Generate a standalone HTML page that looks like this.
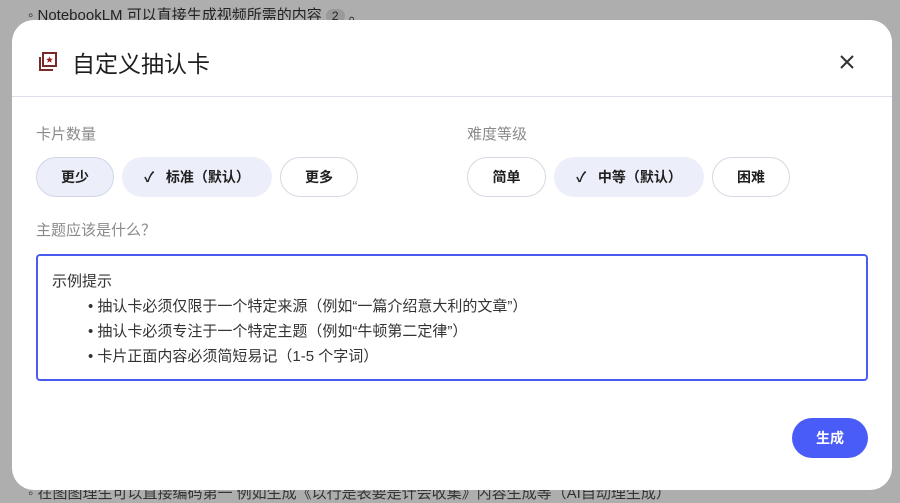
<!DOCTYPE html>
<html><head><meta charset="utf-8"><style>
*{box-sizing:border-box;margin:0;padding:0}
body{width:900px;height:493px;background:#aeaeae;position:relative;overflow:hidden;font-family:"Liberation Sans","Noto Sans CJK SC",sans-serif;color:#1f1f1f}
.bgtxt{position:absolute;left:28px;top:4px;font-size:15px;color:#222}
.bgtxt2{position:absolute;left:28px;top:482px;font-size:15px;color:#333}
.modal{position:absolute;left:12px;top:20px;width:880px;height:470px;background:#fff;border-radius:22px}
.title{position:absolute;left:60px;top:25px;font-size:23px;color:#1f1f1f}
.hr{position:absolute;left:0;right:0;top:76px;border-top:1px solid #dde0ea}
.lbl{position:absolute;font-size:15px;color:#8a8a8a}
.btn{position:absolute;top:137px;height:40px;border-radius:20px;font-size:14px;display:flex;align-items:center;justify-content:center;color:#1f1f1f;font-weight:bold;border:1px solid #d6d9e3;background:#fff}
.sel{background:#eceff9;border-color:#eceff9}
.ta{position:absolute;left:24px;top:234px;width:832px;height:127px;border:2px solid #4a5cf0;border-radius:4px;padding:13px 14px;font-size:15px;line-height:25px;color:#333}
.gen{position:absolute;left:780px;top:398px;width:76px;height:40px;border-radius:20px;background:#4a5cf7;color:#fff;font-size:14px;font-weight:bold;display:flex;align-items:center;justify-content:center}
</style></head><body>
<div class="bgtxt">◦ NotebookLM 可以直接生成视频所需的内容 <span style="background:#9a9a9a;border-radius:9px;padding:0 6px;font-size:12px">2</span> 。</div>
<div class="bgtxt2">◦ 在图图理生可以直接编码第一 例如生成《以行是表要是计会收集》内容生成等（AI自动理生成）</div>
<div class="modal">
<svg style="position:absolute;left:25px;top:31px" width="22" height="22" viewBox="0 0 22 22"><rect x="6" y="2" width="13" height="13" fill="none" stroke="#7a2a2a" stroke-width="2"/><path d="M3 6v13h13" fill="none" stroke="#7a2a2a" stroke-width="2"/><path d="M12.5 5.5l1 2.2 2.3.2-1.8 1.5.6 2.3-2.1-1.3-2.1 1.3.6-2.3-1.8-1.5 2.3-.2z" fill="#a02020"/></svg>
<div class="title">自定义抽认卡</div>
<svg style="position:absolute;left:828px;top:35px" width="14" height="14" viewBox="0 0 14 14"><path d="M1 1L13 13M13 1L1 13" stroke="#333" stroke-width="2"/></svg>
<div class="hr"></div>
<div class="lbl" style="left:24px;top:103px">卡片数量</div>
<div class="lbl" style="left:455px;top:103px">难度等级</div>
<div class="btn sel" style="left:24px;width:78px;border-color:#d0d6e6">更少</div>
<div class="btn sel" style="left:110px;width:150px">✓&nbsp;&nbsp;&nbsp;标准（默认）</div>
<div class="btn" style="left:268px;width:78px">更多</div>
<div class="btn" style="left:455px;width:79px">简单</div>
<div class="btn sel" style="left:542px;width:150px">✓&nbsp;&nbsp;&nbsp;中等（默认）</div>
<div class="btn" style="left:700px;width:78px">困难</div>
<div class="lbl" style="left:24px;top:199px">主题应该是什么？</div>
<div class="ta">示例提示<br><div style="padding-left:36px">• 抽认卡必须仅限于一个特定来源（例如“一篇介绍意大利的文章”）<br>• 抽认卡必须专注于一个特定主题（例如“牛顿第二定律”）<br>• 卡片正面内容必须简短易记（1-5 个字词）</div></div>
<div class="gen">生成</div>
</div>
</body></html>
